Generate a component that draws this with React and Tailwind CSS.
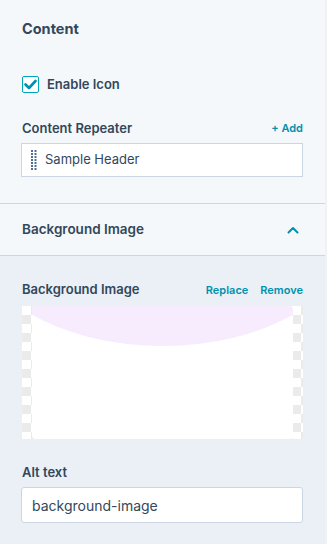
const font = { fontFamily: "Inter, 'Noto Sans', sans-serif" };

const DragHandle = () => (
  <svg width="6" height="21" viewBox="0 0 6 21" className="shrink-0">
    {[0, 3, 6, 9, 12, 15, 18].map((y) => (
      <g key={y} fill="#516f90">
        <rect x="0" y={y} width="2" height="2" />
        <rect x="3.5" y={y} width="2" height="2" />
      </g>
    ))}
  </svg>
);

const Checkbox = () => (
  <span className="flex h-[17px] w-[17px] items-center justify-center rounded-[2px] border-[1.5px] border-[#00a4bd] bg-white">
    <svg width="13" height="11" viewBox="0 0 13 11">
      <path d="M1.5 5.5 L5 9 L11.5 2" fill="none" stroke="#0091ae" strokeWidth="2.6" strokeLinecap="round" strokeLinejoin="round" />
    </svg>
  </span>
);

const Preview = () => (
  <div className="h-[133px] w-full bg-[repeating-conic-gradient(#ebebeb_0_25%,#ffffff_0_50%)] bg-[length:18px_18px] px-[10px]">
    <svg width="100%" height="133" viewBox="0 0 260 133" preserveAspectRatio="none" className="block">
      <defs>
        <clipPath id="card">
          <rect x="0" y="0" width="260" height="133" rx="4" />
        </clipPath>
      </defs>
      <g clipPath="url(#card)">
        <rect width="260" height="133" fill="#ffffff" />
        <ellipse cx="130" cy="-75" rx="190" ry="115" fill="#f7ecfd" />
      </g>
    </svg>
  </div>
);

export default function App() {
  return (
    <div className="min-h-[544px] w-[327px] bg-[#eaf0f6] text-[#33475b]" style={font}>
      <div className="w-[327px] border-r-2 border-[#f0f2f5]">
        <section className="bg-[#f5f8fa] pb-[26px] pl-[21px] pr-[22px] pt-[19px]">
          <h2 className="pl-[1px] text-[14.5px] font-bold leading-5">Content</h2>

          <label className="mt-[36px] flex items-center gap-[8px] pl-[1px]">
            <Checkbox />
            <span className="text-[13px] font-semibold">Enable Icon</span>
          </label>

          <div className="mt-[24px] flex items-center justify-between pl-[1px]">
            <span className="text-[13px] font-semibold">Content Repeater</span>
            <button type="button" className="text-[11px] font-semibold text-[#0091ae]">+ Add</button>
          </div>
          <div className="mt-[5px] flex h-[34px] items-center gap-[8px] border border-[#cbd6e2] bg-white px-[9px]">
            <DragHandle />
            <span className="text-[13px]">Sample Header</span>
          </div>
        </section>

        <div className="flex h-[53px] items-center justify-between border-y border-[#cbd6e2] bg-[#f5f8fa] px-[22px]">
          <span className="text-[13.5px] font-semibold">Background Image</span>
          <svg width="12" height="8" viewBox="0 0 12 8" className="mr-[4px]">
            <path d="M1.5 6.5 L6 2 L10.5 6.5" fill="none" stroke="#0091ae" strokeWidth="2" strokeLinecap="round" strokeLinejoin="round" />
          </svg>
        </div>

        <section className="bg-[#eaf0f6] pb-[24px] pl-[21px] pr-[22px] pt-[24px]">
          <div className="flex items-center justify-between pl-[1px]">
            <span className="text-[13px] font-semibold">Background Image</span>
            <div className="flex gap-[12px] text-[11px] font-semibold text-[#0091ae]">
              <button type="button">Replace</button>
              <button type="button">Remove</button>
            </div>
          </div>
          <div className="mt-[6px] pl-[1px]">
            <Preview />
          </div>

          <div className="mt-[24px] pl-[1px] text-[13px] font-semibold">Alt text</div>
          <div className="mt-[5px] flex h-[36px] items-center rounded-[3px] border border-[#cbd6e2] bg-white px-[10px]">
            <span className="text-[14px]">background-image</span>
          </div>
        </section>
      </div>
    </div>
  );
}
